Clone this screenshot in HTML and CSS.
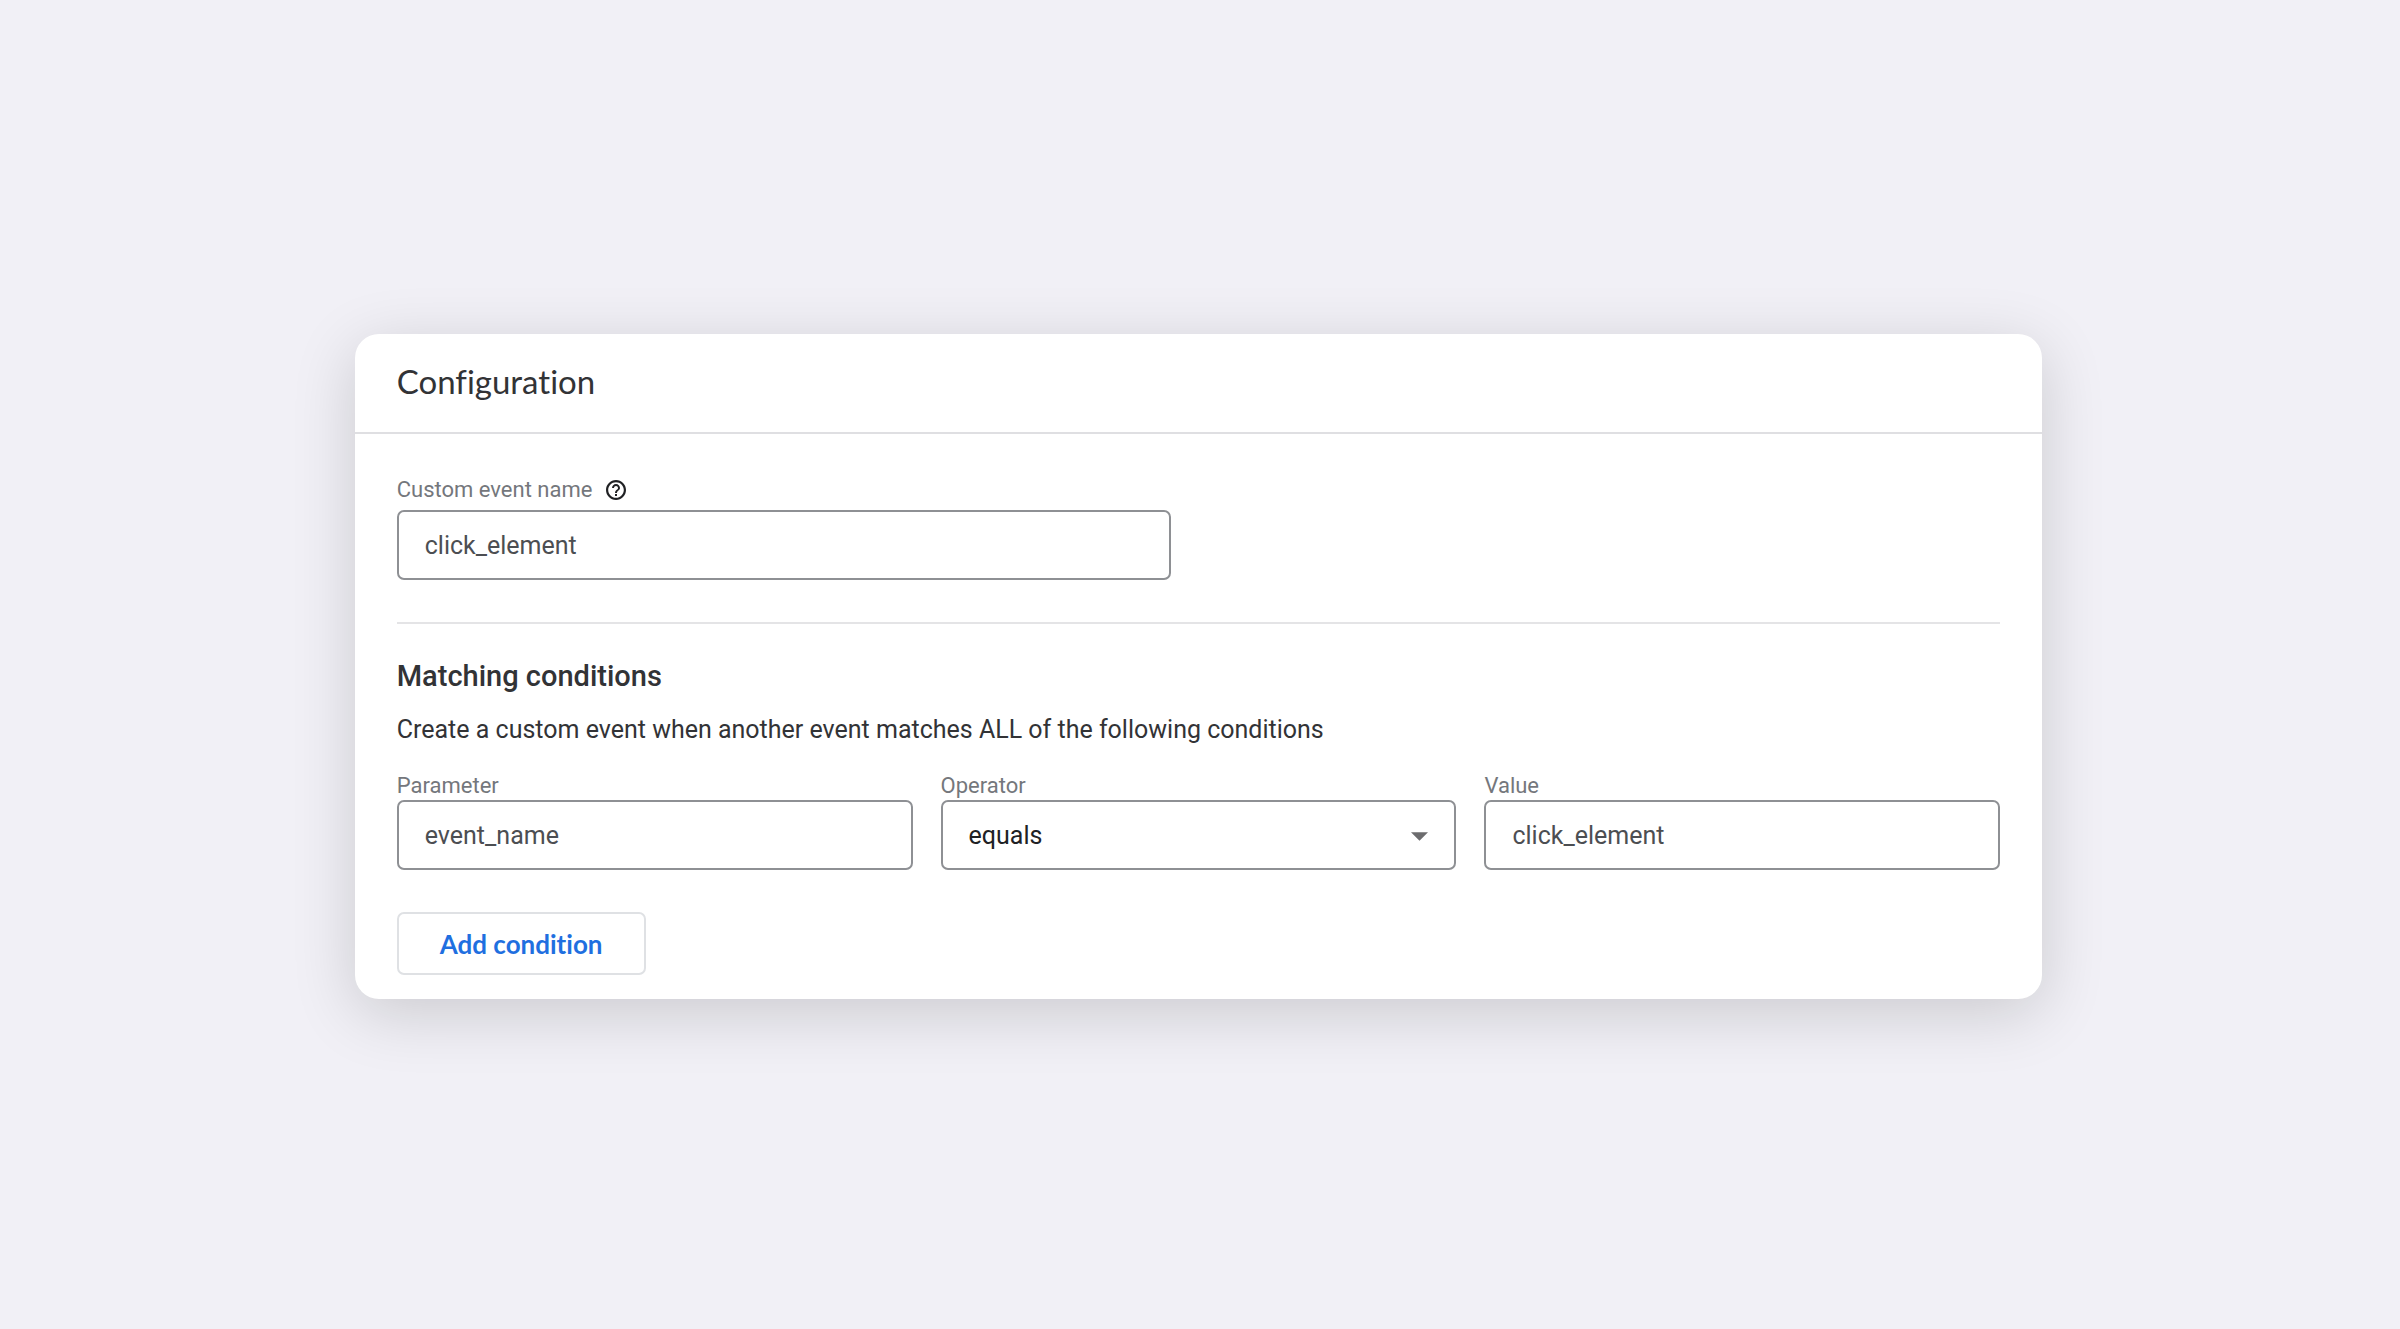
FILE: index.html
```html
<!DOCTYPE html>
<html lang="en">
<head>
<meta charset="utf-8">
<title>Configuration</title>
<link rel="stylesheet" href="styles.css">
</head>
<body>
<main class="card">
  <header class="card-header">
    <h1 class="card-title">Configuration</h1>
  </header>
  <form class="card-body">
    <section class="event">
      <div class="label-row">
        <label class="label" for="event-name">Custom event name</label>
        <button class="help" type="button" aria-label="Help">
          <svg class="help-icon" viewBox="0 0 24 24" aria-hidden="true"><path d="M11 18h2v-2h-2v2zm1-16C6.480 2 2 6.480 2 12s4.480 10 10 10 10-4.480 10-10S17.520 2 12 2zm0 17.800c-4.300 0-7.800-3.500-7.800-7.800s3.500-7.800 7.800-7.800 7.800 3.500 7.800 7.800-3.500 7.800-7.800 7.800zM12 6c-2.210 0-4 1.790-4 4h2c0-1.100.9-2 2-2s2 .9 2 2c0 2-3 1.750-3 5h2c0-2.250 3-2.500 3-5 0-2.210-1.790-4-4-4z"/></svg>
        </button>
      </div>
      <input class="field" id="event-name" type="text" value="click_element">
    </section>
    <section class="matching">
      <h2 class="section-title">Matching conditions</h2>
      <p class="description">Create a custom event when another event matches ALL of the following conditions</p>
      <div class="conditions">
        <div class="condition">
          <label class="label" for="parameter">Parameter</label>
          <input class="field" id="parameter" type="text" value="event_name">
        </div>
        <div class="condition">
          <label class="label" for="operator">Operator</label>
          <div class="select-wrap">
            <select class="field select" id="operator"><option>equals</option></select>
            <svg class="arrow" viewBox="0 0 16 8" aria-hidden="true"><path d="M0 0h16L8 8z"/></svg>
          </div>
        </div>
        <div class="condition">
          <label class="label" for="value">Value</label>
          <input class="field" id="value" type="text" value="click_element">
        </div>
      </div>
      <button class="add" type="button">Add condition</button>
    </section>
  </form>
</main>
</body>
</html>
```
FILE: styles.css
```css
* {
  box-sizing: border-box;
}

body {
  margin: 0;
  padding: 4px 3px 0 0;
  min-height: 100vh;
  display: flex;
  align-items: center;
  justify-content: center;
  background: #f1f0f6;
  color: #323336;
  font-family: Roboto, "Liberation Sans", sans-serif;
}

.card {
  width: 70.4%;
  background: #fff;
  border-radius: 24px;
  box-shadow: 0 14px 64px rgba(0, 0, 0, 0.16);
}

.card-header {
  padding: 26px 42px 30px;
  border-bottom: 2px solid #dfdfe2;
}

.card-title {
  margin: 0;
  font-family: Lato, sans-serif;
  font-size: 33px;
  font-weight: 400;
  font-variant-ligatures: none;
  line-height: 42px;
}

.card-body {
  padding: 42px 42px 24px;
}

.event {
  padding-bottom: 42px;
  border-bottom: 2px solid #e4e4e6;
}

.label-row {
  display: flex;
  align-items: center;
  gap: 12px;
  height: 28px;
  margin-bottom: 6px;
}

.label {
  display: block;
  color: #74777c;
  font-size: 22px;
  line-height: 28px;
}

.help {
  display: flex;
  padding: 0;
  border: 0;
  background: none;
}

.help-icon {
  width: 24px;
  height: 24px;
  fill: #202124;
}

.field {
  display: block;
  width: 100%;
  height: 70px;
  padding: 0 26px;
  border: 2px solid #8e9094;
  border-radius: 7px;
  background: #fff;
  color: #4c4e52;
  font-family: inherit;
  font-size: 25px;
}

.event .field {
  width: 48.3%;
}

.matching {
  padding-top: 35px;
}

.section-title {
  margin: 0;
  font-size: 29px;
  font-weight: 500;
  line-height: 35px;
}

.description {
  margin: 18px 0 24px;
  font-size: 25px;
  line-height: 36px;
}

.conditions {
  display: grid;
  grid-template-columns: repeat(3, 1fr);
  gap: 28px;
}

.select-wrap {
  position: relative;
}

.select {
  appearance: none;
  color: #202124;
}

.arrow {
  position: absolute;
  right: 28px;
  top: 32px;
  width: 17px;
  height: 9px;
  fill: #6c6c6e;
  pointer-events: none;
}

.add {
  display: block;
  height: 63px;
  margin-top: 42px;
  padding: 0 41px;
  border: 2px solid #dfe1e4;
  border-radius: 7px;
  background: #fff;
  color: #1f6fe0;
  font-family: Lato, sans-serif;
  font-size: 26px;
  font-weight: 700;
  font-variant-ligatures: none;
}
```
